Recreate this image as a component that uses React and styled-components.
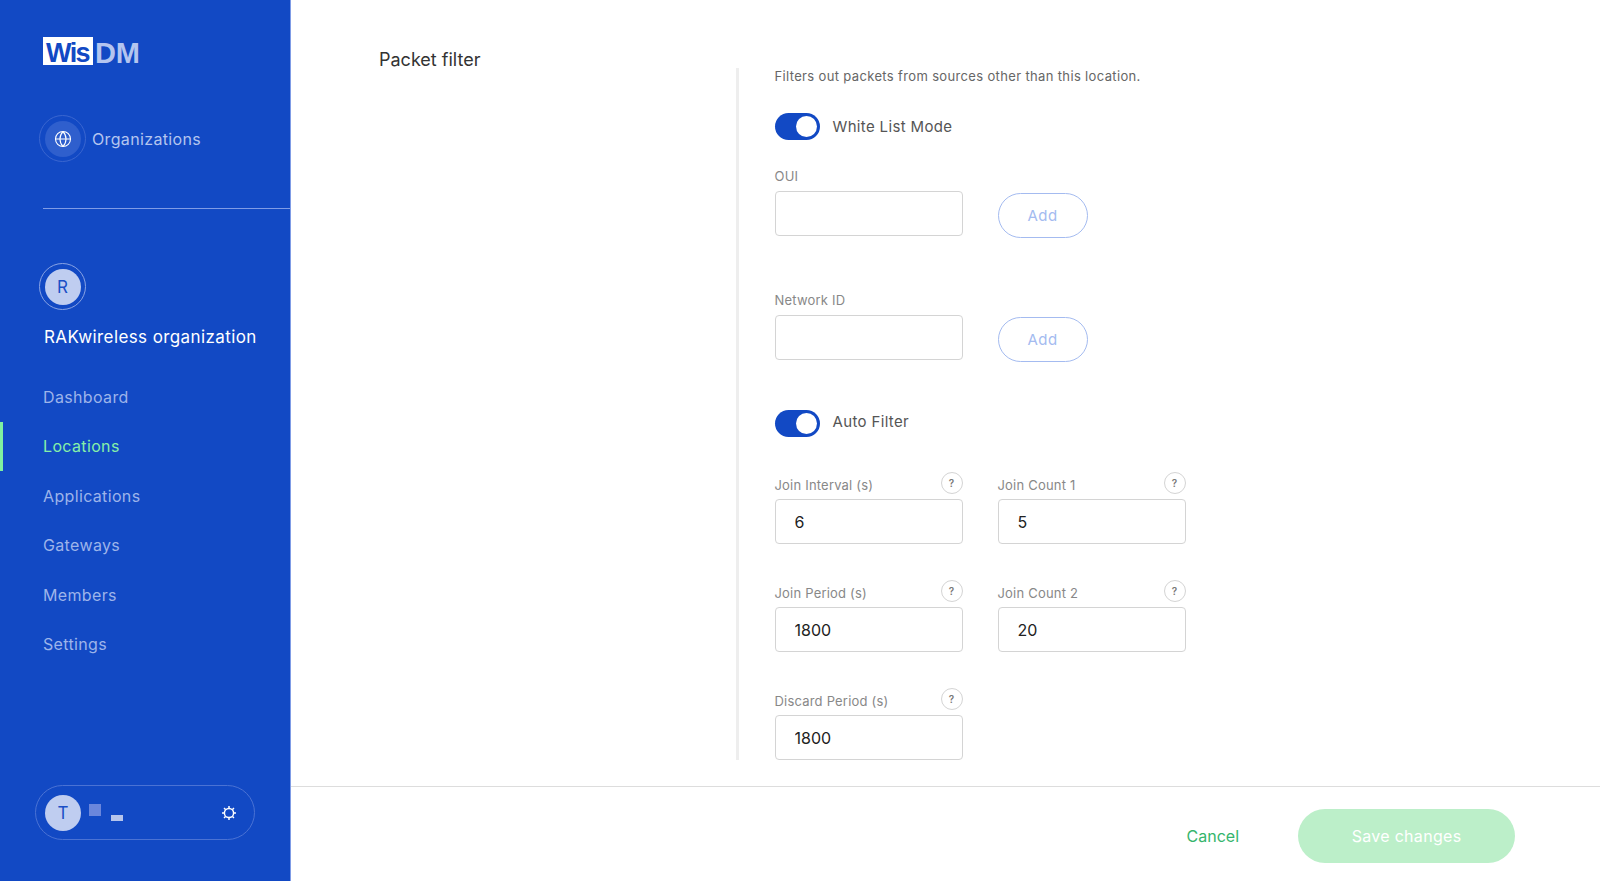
import styled, { createGlobalStyle } from "styled-components";
import { Globe } from "lucide-react";

const GlobalStyle = createGlobalStyle`
    html, body {
        margin: 0;
        padding: 0;
        height: 100%;
        background: #fff;
        font-family: Inter, "Liberation Sans", sans-serif;
    }
    * { box-sizing: border-box; }
`;

const navItems = ["Dashboard", "Locations", "Applications", "Gateways", "Members", "Settings"];
const gearTeeth = [0, 45, 90, 135, 180, 225, 270, 315];

function Toggle() {
    return (
        <Styled.Toggle>
            <Styled.Knob />
        </Styled.Toggle>
    );
}

function NumberField({ label, value }) {
    return (
        <div>
            <Styled.FieldHead>
                <Styled.Label>{label}</Styled.Label>
                <Styled.Help>?</Styled.Help>
            </Styled.FieldHead>
            <Styled.Input defaultValue={value} />
        </div>
    );
}

function AddField({ label, top }) {
    return (
        <Styled.AddRow $top={top}>
            <div>
                <Styled.AddLabel>{label}</Styled.AddLabel>
                <Styled.Input />
            </div>
            <Styled.AddButton>Add</Styled.AddButton>
        </Styled.AddRow>
    );
}

function GearIcon() {
    return (
        <svg width="16" height="16" viewBox="0 0 16 16" fill="none" stroke="#fff">
            <circle cx="8" cy="8" r="4.6" strokeWidth="1.5" />
            {gearTeeth.map((angle) => (
                <line key={angle} x1="8" y1="3" x2="8" y2="1" strokeWidth="1.5" transform={`rotate(${angle} 8 8)`} />
            ))}
        </svg>
    );
}

export default function App() {
    return (
        <Styled.Page>
            <GlobalStyle />
            <Styled.Sidebar>
                <Styled.Logo>
                    <Styled.LogoBox>Wis</Styled.LogoBox>
                    <Styled.LogoRest>DM</Styled.LogoRest>
                </Styled.Logo>
                <Styled.OrgLink>
                    <Styled.Ring $dim>
                        <Styled.GlobeDisc>
                            <Globe size={18} color="#fff" strokeWidth={1.5} />
                        </Styled.GlobeDisc>
                    </Styled.Ring>
                    <span>Organizations</span>
                </Styled.OrgLink>
                <Styled.Divider />
                <Styled.Ring>
                    <Styled.Avatar>R</Styled.Avatar>
                </Styled.Ring>
                <Styled.OrgName>RAKwireless organization</Styled.OrgName>
                <Styled.Nav>
                    {navItems.map((item) => (
                        <Styled.NavItem key={item} $active={item === "Locations"}>
                            {item}
                        </Styled.NavItem>
                    ))}
                </Styled.Nav>
                <Styled.UserPill>
                    <Styled.Avatar>T</Styled.Avatar>
                    <Styled.BlockDark />
                    <Styled.BlockLight />
                    <Styled.Gear>
                        <GearIcon />
                    </Styled.Gear>
                </Styled.UserPill>
            </Styled.Sidebar>
            <Styled.Main>
                <Styled.Body>
                    <Styled.SectionTitle>Packet filter</Styled.SectionTitle>
                    <Styled.Form>
                        <Styled.Description>
                            Filters out packets from sources other than this location.
                        </Styled.Description>
                        <Styled.ToggleRow $top={29}>
                            <Toggle />
                            <span>White List Mode</span>
                        </Styled.ToggleRow>
                        <AddField label="OUI" top={28} />
                        <AddField label="Network ID" top={54} />
                        <Styled.ToggleRow $top={48}>
                            <Toggle />
                            <Styled.LiftedLabel>Auto Filter</Styled.LiftedLabel>
                        </Styled.ToggleRow>
                        <Styled.FieldGrid>
                            <NumberField label="Join Interval (s)" value="6" />
                            <NumberField label="Join Count 1" value="5" />
                            <NumberField label="Join Period (s)" value="1800" />
                            <NumberField label="Join Count 2" value="20" />
                            <NumberField label="Discard Period (s)" value="1800" />
                        </Styled.FieldGrid>
                    </Styled.Form>
                </Styled.Body>
                <Styled.Footer>
                    <Styled.Cancel>Cancel</Styled.Cancel>
                    <Styled.Save>Save changes</Styled.Save>
                </Styled.Footer>
            </Styled.Main>
        </Styled.Page>
    );
}

const Styled = {
    Page: styled.div`
        display: flex;
        width: 100%;
        height: 881px;
        overflow: hidden;
    `,

    Sidebar: styled.aside`
        display: flex;
        flex-direction: column;
        align-items: flex-start;
        flex: 0 0 291px;
        padding: 37px 0 41px 39px;
        background: #1249c4;
        border-right: 1px solid #7f9ce6;
    `,

    Logo: styled.div`
        display: flex;
        height: 28px;
        margin-left: 4px;
        font-family: "Liberation Sans", Arial, sans-serif;
        font-weight: 700;
    `,

    LogoBox: styled.div`
        width: 50px;
        height: 28px;
        padding: 1px 0 0 3px;
        background: #fff;
        color: #1249c4;
        font-size: 27px;
        line-height: 30px;
        letter-spacing: -1.6px;
    `,

    LogoRest: styled.div`
        margin-left: 2px;
        color: #b4c5ef;
        font-size: 29px;
        line-height: 32px;
        letter-spacing: -0.3px;
    `,

    OrgLink: styled.div`
        display: flex;
        align-items: center;
        gap: 6px;
        margin-top: 50px;
        color: #b4c5ef;
        font-size: 16px;
        letter-spacing: 0.35px;
    `,

    Ring: styled.div`
        display: flex;
        align-items: center;
        justify-content: center;
        width: 47px;
        height: 47px;
        border-radius: 50%;
        border: 1px solid ${(p) => (p.$dim ? "#3a66d0" : "#89a3e4")};
    `,

    GlobeDisc: styled.div`
        display: flex;
        align-items: center;
        justify-content: center;
        width: 36px;
        height: 36px;
        border-radius: 50%;
        background: #2f5fcd;
    `,

    Avatar: styled.div`
        display: flex;
        align-items: center;
        justify-content: center;
        flex: 0 0 36px;
        width: 36px;
        height: 36px;
        border-radius: 50%;
        background: #bfcdf0;
        color: #1a4fc6;
        font-size: 17px;
    `,

    Divider: styled.div`
        align-self: stretch;
        height: 1px;
        margin: 46px 0 54px 4px;
        background: #7f9ce6;
    `,

    OrgName: styled.div`
        margin: 15px 0 0 5px;
        color: #fff;
        font-size: 17px;
        line-height: 24px;
        letter-spacing: 0.4px;
        white-space: nowrap;
    `,

    Nav: styled.nav`
        display: flex;
        flex-direction: column;
        margin: 23px 0 0 -39px;
        align-self: stretch;
    `,

    NavItem: styled.div`
        display: flex;
        align-items: center;
        height: 49.5px;
        padding-left: ${(p) => (p.$active ? "40px" : "43px")};
        border-left: ${(p) => (p.$active ? "3px solid #7ff0a0" : "none")};
        color: ${(p) => (p.$active ? "#86f0a8" : "#9db4ea")};
        font-size: 16px;
        letter-spacing: 0.35px;
    `,

    UserPill: styled.div`
        display: flex;
        align-items: flex-start;
        width: 220px;
        height: 55px;
        margin: auto 0 0 -4px;
        padding: 9px 0 0 9px;
        border: 1px solid #4a72d4;
        border-radius: 28px;
    `,

    BlockDark: styled.div`
        width: 12px;
        height: 12px;
        margin: 9px 0 0 8px;
        background: #6a86dc;
    `,

    BlockLight: styled.div`
        width: 12px;
        height: 6px;
        margin: 20px 0 0 10px;
        background: #b6c5ec;
    `,

    Gear: styled.div`
        display: flex;
        margin: 10px 17px 0 auto;
    `,

    Main: styled.main`
        display: flex;
        flex: 1;
        flex-direction: column;
        min-width: 0;
    `,

    Body: styled.div`
        display: flex;
        flex: 1;
        align-items: flex-start;
        padding: 68px 0 0 88px;
    `,

    SectionTitle: styled.div`
        flex: 0 0 357px;
        margin-top: -19px;
        color: #333;
        font-size: 18px;
        line-height: 22px;
    `,

    Form: styled.div`
        height: 692px;
        padding-left: 35.5px;
        border-left: 3px solid #eee;
    `,

    Description: styled.div`
        color: #666;
        font-size: 13px;
        line-height: 16px;
        letter-spacing: 0.35px;
        white-space: nowrap;
    `,

    ToggleRow: styled.div`
        display: flex;
        align-items: center;
        gap: 13px;
        margin-top: ${(p) => p.$top}px;
        color: #555;
        font-size: 15px;
        letter-spacing: 0.35px;
    `,

    LiftedLabel: styled.span`
        margin-top: -4px;
    `,

    Toggle: styled.div`
        display: flex;
        align-items: center;
        justify-content: flex-end;
        width: 45px;
        height: 27px;
        padding-right: 3px;
        border-radius: 14px;
        background: #1249c4;
    `,

    Knob: styled.div`
        width: 21px;
        height: 21px;
        border-radius: 50%;
        background: #fff;
    `,

    AddRow: styled.div`
        display: flex;
        gap: 35px;
        margin-top: ${(p) => p.$top}px;
    `,

    AddLabel: styled.div`
        margin-bottom: 7px;
        color: #888;
        font-size: 13px;
        line-height: 16px;
        letter-spacing: 0.2px;
    `,

    AddButton: styled.button`
        width: 90px;
        height: 45px;
        margin-top: 25px;
        border: 1px solid #a4bbf0;
        border-radius: 23px;
        background: #fff;
        color: #a4bbf0;
        font-family: inherit;
        font-size: 15px;
        letter-spacing: 0.5px;
    `,

    Input: styled.input`
        display: block;
        width: 188px;
        height: 45px;
        padding: 0 19px;
        border: 1px solid #d4d4d4;
        border-radius: 4px;
        outline: none;
        color: #222;
        font-family: inherit;
        font-size: 16px;
    `,

    FieldGrid: styled.div`
        display: grid;
        grid-template-columns: 188px 188px;
        gap: 36px 35px;
        margin-top: 35px;
    `,

    FieldHead: styled.div`
        display: flex;
        align-items: flex-end;
        justify-content: space-between;
        height: 22px;
        margin-bottom: 5px;
    `,

    Label: styled.div`
        margin-bottom: 1px;
        color: #888;
        font-size: 13px;
        line-height: 16px;
        letter-spacing: 0.2px;
    `,

    Help: styled.div`
        display: flex;
        align-items: center;
        justify-content: center;
        width: 22px;
        height: 22px;
        border: 1px solid #d4d4d4;
        border-radius: 50%;
        color: #777;
        font-size: 10px;
        font-weight: 600;
    `,

    Footer: styled.footer`
        display: flex;
        flex: 0 0 95px;
        align-items: flex-start;
        justify-content: flex-end;
        gap: 59px;
        padding: 22px 85px 0 0;
        border-top: 1px solid #ddd;
    `,

    Cancel: styled.div`
        color: #35b56c;
        font-size: 16px;
        line-height: 54px;
    `,

    Save: styled.button`
        width: 217px;
        height: 54px;
        border: none;
        border-radius: 27px;
        background: #bcefc9;
        color: #fff;
        font-family: inherit;
        font-size: 16px;
        letter-spacing: 0.3px;
    `,
};
